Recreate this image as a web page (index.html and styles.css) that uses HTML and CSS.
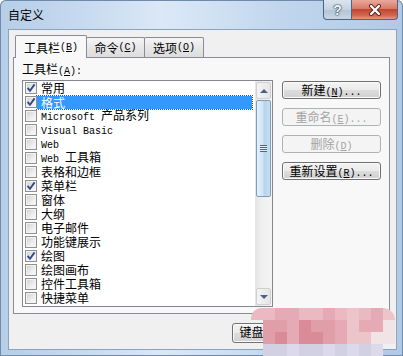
FILE: index.html
```html
<!DOCTYPE html>
<html lang="zh-CN">
  <head>
    <meta charset="UTF-8" />
    <title>自定义</title>
    <link rel="stylesheet" href="styles.css">
  </head>
  <body>
    <div class="window">
      <div class="titlebar">
        <span class="title">自定义</span>
        <div class="caption-btns">
          <div class="cap help">?</div>
          <div class="cap close">
            <svg width="16" height="12" viewBox="0 0 16 12">
              <path d="M4 2 L12 10 M12 2 L4 10" stroke="#5b2424" stroke-width="4" stroke-linecap="round" fill="none" />
              <path d="M4 2 L12 10 M12 2 L4 10" stroke="#ffffff" stroke-width="2.2" stroke-linecap="round" fill="none" />
            </svg>
          </div>
        </div>
      </div>

      <div class="client">
        <div class="tabs">
          <div class="tab active">工具栏<span class="lat">(<u>B</u>)</span></div>
          <div class="tab second">命令<span class="lat">(<u>C</u>)</span></div>
          <div class="tab third">选项<span class="lat">(<u>O</u>)</span></div>
        </div>

        <div class="panel">
          <div class="label">工具栏<span class="lat">(<u>A</u>):</span></div>
          <div class="panel-body">
            <div class="listbox">
              <ul class="items">
                <li><span class="cb checked"><svg width="12" height="12" viewBox="0 0 12 12"><path d="M2.6 5.8 L5 8.8 L9.6 2.4" stroke="#33498c" stroke-width="1.9" fill="none" /></svg></span><span class="txt">常用</span></li>
                <li class="sel"><span class="cb checked"><svg width="12" height="12" viewBox="0 0 12 12"><path d="M2.6 5.8 L5 8.8 L9.6 2.4" stroke="#33498c" stroke-width="1.9" fill="none" /></svg></span><span class="txt">格式</span></li>
                <li><span class="cb"></span><span class="txt"><span class="lat">Microsoft </span>产品系列</span></li>
                <li><span class="cb"></span><span class="txt"><span class="lat">Visual Basic</span></span></li>
                <li><span class="cb"></span><span class="txt"><span class="lat">Web</span></span></li>
                <li><span class="cb"></span><span class="txt"><span class="lat">Web </span>工具箱</span></li>
                <li><span class="cb"></span><span class="txt">表格和边框</span></li>
                <li><span class="cb checked"><svg width="12" height="12" viewBox="0 0 12 12"><path d="M2.6 5.8 L5 8.8 L9.6 2.4" stroke="#33498c" stroke-width="1.9" fill="none" /></svg></span><span class="txt">菜单栏</span></li>
                <li><span class="cb"></span><span class="txt">窗体</span></li>
                <li><span class="cb"></span><span class="txt">大纲</span></li>
                <li><span class="cb"></span><span class="txt">电子邮件</span></li>
                <li><span class="cb"></span><span class="txt">功能键展示</span></li>
                <li><span class="cb checked"><svg width="12" height="12" viewBox="0 0 12 12"><path d="M2.6 5.8 L5 8.8 L9.6 2.4" stroke="#33498c" stroke-width="1.9" fill="none" /></svg></span><span class="txt">绘图</span></li>
                <li><span class="cb"></span><span class="txt">绘图画布</span></li>
                <li><span class="cb"></span><span class="txt">控件工具箱</span></li>
                <li><span class="cb"></span><span class="txt">快捷菜单</span></li>
              </ul>
              <div class="scrollbar">
                <div class="arrow up"><span class="tri-up"></span></div>
                <div class="thumb"><span class="grip"></span></div>
                <div class="track"></div>
                <div class="arrow down"><span class="tri-down"></span></div>
              </div>
            </div>

            <div class="side-btns">
              <button class="btn">新建<span class="lat">(<u>N</u>)...</span></button>
              <button class="btn" disabled>重命名<span class="lat">(<u>E</u>)...</span></button>
              <button class="btn" disabled>删除<span class="lat">(<u>D</u>)</span></button>
              <button class="btn">重新设置<span class="lat">(<u>R</u>)...</span></button>
            </div>
          </div>
        </div>

        <div class="footer">
          <button class="btn wide">键盘<span class="lat">(<u>K</u>)...</span></button>
          <button class="btn wide">关闭</button>
        </div>
      </div>

      <!-- pixelated blur covering the lower right corner -->
      <div class="mosaic">
        <i class="a"></i><i class="a"></i><i class="b"></i><i class="b"></i><i class="a"></i><i class="a"></i><i class="b"></i><i class="a"></i><i class="e"></i><i class="a"></i><i class="b"></i><i class="e"></i>
        <i class="t"></i><i class="c"></i><i class="c"></i><i class="b"></i><i class="d"></i><i class="c"></i><i class="c"></i><i class="b"></i><i class="e"></i><i class="b"></i><i class="b"></i><i class="f"></i>
        <i class="t"></i><i class="c"></i><i class="d"></i><i class="b"></i><i class="d"></i><i class="d"></i><i class="c"></i><i class="b"></i><i class="e"></i><i class="e"></i><i class="f"></i><i class="f"></i>
        <i class="t"></i><i class="g"></i><i class="g"></i><i class="h"></i><i class="g"></i><i class="g"></i><i class="h"></i><i class="g"></i><i class="h"></i><i class="g"></i><i class="h"></i><i class="t"></i>
      </div>
    </div>
  </body>
</html>
```

FILE: styles.css
```css
* {
  box-sizing: border-box;
}

body {
  margin: 0;
  background: #ffffff;
  font-family: "Noto Sans CJK SC", sans-serif;
  font-size: 12px;
  color: #000;
}

/* Latin runs, narrow like the bitmap font */
.lat {
  font-family: "Liberation Mono", monospace;
  font-size: 10px;
}

/* Window frame (Aero glass) */
.window {
  position: relative;
  width: 403px;
  height: 356px;
  overflow: hidden;
  border-radius: 6px 6px 0 0;
  background: linear-gradient(90deg, #b6cee8 0%, #c6d9ef 20%, #dbe8f6 40%, #d2e2f3 52%, #c2d7ee 68%, #b9d0ea 85%, #b1c9e5 100%);
  box-shadow: inset 0 0 0 1px #6f8aab;
}

.titlebar {
  display: flex;
  align-items: flex-start;
  height: 29px;
}

.title {
  padding-left: 8px;
  line-height: 30px;
  font-size: 12px;
}

.caption-btns {
  display: flex;
  margin-left: auto;
  margin-right: 5px;
}

.cap {
  height: 20px;
  display: flex;
  align-items: center;
  justify-content: center;
  border: 1px solid #4c6585;
  border-top: none;
}

.help {
  width: 29px;
  border-radius: 0 0 0 4px;
  background: linear-gradient(#dbe5ef, #c5d3e2 50%, #b3c4d6 51%, #c9d6e4);
  color: #f4f7fa;
  font-family: "Liberation Sans", sans-serif;
  font-weight: bold;
  font-size: 14px;
  text-shadow: 0 0 1px #2f3e52, 0 0 1px #2f3e52, 0 0 2px #2f3e52;
}

.close {
  width: 47px;
  margin-left: -1px;
  border-radius: 0 0 4px 0;
  background: linear-gradient(#e9a99c, #d77a68 45%, #c2452f 50%, #d0654f 80%, #e29a85);
}

/* Dialog client area */
.client {
  margin: 0 6px 0 8px;
  height: 321px;
  border: 1px solid #8ba3bd;
  background: #f0f0f0;
  padding: 5px 6px 0 4px;
}

.tabs {
  position: relative;
  z-index: 1;
  display: flex;
  align-items: flex-start;
  height: 23px;
  padding-left: 2px;
}

.tab {
  display: flex;
  align-items: center;
  justify-content: center;
  height: 20px;
  margin-top: 2px;
  border: 1px solid #898c95;
  border-bottom: none;
  border-radius: 2px 2px 0 0;
  background: linear-gradient(#f5f5f5, #e6e6e6 55%, #dcdcdc);
}

.tab.active {
  width: 72px;
  height: 23px;
  margin-top: 0;
  background: #f8f8f8;
  position: relative;
  z-index: 2;
}

.tab.second {
  width: 59px;
  margin-left: -1px;
}

.tab.third {
  width: 60px;
  margin-left: -1px;
}

.panel {
  margin-top: -1px;
  height: 257px;
  border: 1px solid #898c95;
  background: #f8f8f8;
  padding: 4px 0 0 8px;
}

.label {
  line-height: 14px;
  height: 14px;
  margin-bottom: 4px;
}

.panel-body {
  display: flex;
  gap: 9px;
}

/* List box with checkboxes */
.listbox {
  display: flex;
  width: 251px;
  height: 227px;
  border: 1px solid #828790;
  background: #fff;
}

.items {
  flex: 1;
  list-style: none;
  margin: 0;
  padding: 0;
}

.items li {
  display: flex;
  align-items: center;
  height: 14px;
}

.cb {
  flex: none;
  width: 12px;
  height: 12px;
  margin-left: 2px;
  border: 1px solid #8e8f8f;
  background: linear-gradient(135deg, #cdcdcd, #eeeeee 60%, #fafafa);
  box-shadow: inset 0 0 0 1px #f3f3f3;
  position: relative;
}

.cb svg {
  position: absolute;
  left: -1px;
  top: -1px;
}

.txt {
  padding-left: 4px;
  line-height: 14px;
  white-space: nowrap;
}

.sel .txt {
  flex: 1;
  margin-right: 3px;
  height: 13px;
  line-height: 13px;
  background: #3399ff;
  color: #fff;
  outline: 1px dotted #555;
}

/* Vertical scrollbar */
.scrollbar {
  display: flex;
  flex-direction: column;
  width: 17px;
  background: linear-gradient(90deg, #e4e4e4, #efefef 40%, #f4f4f4);
}

.arrow {
  display: flex;
  align-items: center;
  justify-content: center;
  height: 17px;
  margin: 1px;
  border: 1px solid #cfcfcf;
  border-radius: 2px;
  background: linear-gradient(90deg, #f4f4f4, #e6e6e6);
}

.tri-up,
.tri-down {
  width: 0;
  height: 0;
  border-left: 4px solid transparent;
  border-right: 4px solid transparent;
}

.tri-up {
  border-bottom: 4px solid #4d6185;
}

.tri-down {
  border-top: 4px solid #4d6185;
}

.thumb {
  display: flex;
  align-items: center;
  justify-content: center;
  height: 97px;
  margin: 0 1px;
  border: 1px solid #7c9dbb;
  border-radius: 2px;
  background: linear-gradient(90deg, #e6f1fa, #cfe4f4 45%, #b5d4ec 55%, #c7def1);
}

.grip {
  width: 7px;
  height: 7px;
  background: repeating-linear-gradient(#4e6480 0 1px, #e6f0f8 1px 2px);
}

.track {
  flex: 1;
}

/* Push buttons */
.side-btns {
  display: flex;
  flex-direction: column;
  gap: 9px;
  margin-top: 1px;
}

.btn {
  width: 99px;
  height: 18px;
  padding: 0;
  border: 1px solid #707070;
  border-radius: 3px;
  background: linear-gradient(#f3f3f3, #ebebeb 48%, #dddddd 52%, #d0d0d0);
  box-shadow: inset 0 0 0 1px #fbfbfb;
  font-family: "Noto Sans CJK SC", sans-serif;
  font-size: 12px;
  line-height: 16px;
  color: #000;
}

.btn:disabled {
  border-color: #adb2b5;
  background: #f4f4f4;
  box-shadow: none;
  color: #a3a3a3;
}

.footer {
  display: flex;
  justify-content: flex-end;
  gap: 8px;
  margin-top: 9px;
}

.btn.wide {
  width: 75px;
  height: 20px;
}

/* Pixelated blur on top of the bottom buttons */
.mosaic {
  position: absolute;
  left: 251px;
  top: 308px;
  display: grid;
  grid-template-columns: repeat(12, 12px);
  grid-auto-rows: 12px;
  border-radius: 10px 12px 0 10px;
  overflow: hidden;
}

.mosaic i {
  display: block;
}

.mosaic .a { background: #eab9c1; }
.mosaic .b { background: #e5aab3; }
.mosaic .c { background: #e09fa8; }
.mosaic .d { background: #d98c98; }
.mosaic .e { background: #ecc5cb; }
.mosaic .f { background: #f1e4e7; }
.mosaic .g { background: #d2d1e4; }
.mosaic .h { background: #dcdaea; }
.mosaic .t { background: transparent; }
```
